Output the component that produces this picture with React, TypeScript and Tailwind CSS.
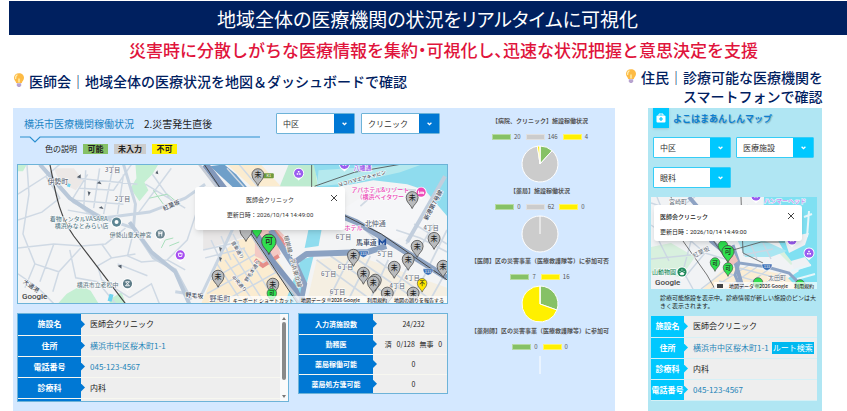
import React from 'react';

type Tone = 'gray' | 'green' | 'yellow';

const pinFill: Record<Tone, string> = {
  gray: '#b9bbbd',
  green: '#2fe04f',
  yellow: '#ffe600',
};

const pinText: Record<Tone, string> = {
  gray: '未',
  green: '可',
  yellow: '不',
};

const Bulb = () => (
  <svg className="w-3 h-4 shrink-0" viewBox="0 0 12 16">
    <path d="M6 1.2C3 1.2 1 3.2 1 5.8c0 2.2 1.6 3.1 2.2 5.2h5.6C9.400 8.900 11 8 11 5.800 11 3.200 9 1.200 6 1.200z" fill="#fdbb45" />
    <path d="M4 3c-1.200.8-1.600 2-1.300 3.400" stroke="#fff0b8" strokeWidth="1.300" fill="none" strokeLinecap="round" />
    <path d="M5 6l1 1 1-1v4.500H5z" fill="#ffe08a" />
    <path d="M3.800 11.200h4.400v2.300L7 15H5l-1.200-1.500z" fill="#b7a3cf" />
  </svg>
);

const SelectBox = ({ label, options, tone }: { label: string; options: string[]; tone: 'blue' | 'cyan' }) => (
  <div
    className={
      tone === 'blue'
        ? 'relative flex w-[79px] h-[21px] border border-[#6db3d8] rounded-[1px] bg-white'
        : 'relative flex w-[78px] h-[21px] border border-[#35cdf7] rounded-[1px] bg-white'
    }
  >
    <select aria-label={label} className="w-full appearance-none bg-transparent pl-[6px] text-[8px] text-[#333] outline-none">
      {options.map((o) => (
        <option key={o}>{o}</option>
      ))}
    </select>
    <span
      className={
        tone === 'blue'
          ? 'pointer-events-none flex items-center justify-center w-5 shrink-0 bg-[#0078d4]'
          : 'pointer-events-none flex items-center justify-center w-5 shrink-0 bg-[#00c8ff]'
      }
    >
      <svg className="w-[5px] h-1" viewBox="0 0 5 4">
        <path d="M.6.8L2.500 2.700 4.400.8" fill="none" stroke="#fff" strokeWidth="1.300" />
      </svg>
    </span>
  </div>
);

const Pin = ({ x, y, tone, s = 1, blank }: { x: number; y: number; tone: Tone; s?: number; blank?: boolean }) => (
  <g transform={`translate(${x} ${y}) scale(${s})`}>
    <path
      d="M0 10.500C-1.200 6.500-6 4.500-6-.6a6 6 0 0 1 12 0C6 4.500 1.200 6.500 0 10.500z"
      fill={pinFill[tone]}
      stroke="#4a4a4a"
      strokeWidth=".8"
    />
    {!blank && (
      <text y="2" fontSize="7" fontWeight="500" textAnchor="middle" fill="#222">
        {pinText[tone]}
      </text>
    )}
  </g>
);

const Poi = ({ x, y, fill, children }: { x: number; y: number; fill: string; children?: React.ReactNode }) => (
  <g transform={`translate(${x} ${y})`}>
    <path d="M0 7.500C-1 5.500-5.500 4-5.500 0a5.500 5.500 0 0 1 11 0C5.500 4 1 5.500 0 7.500z" fill="#fff" />
    <circle r="4.600" fill={fill} />
    {children ?? <path d="M-2 1.500h1.600v-1.600H-2zM.4 1.500H2v-1.600H.4zM-.8-.8H.8v-1.400H-.8z" fill="#fff" />}
  </g>
);

const Shield = ({ x, y }: { x: number; y: number }) => (
  <g transform={`translate(${x} ${y})`}>
    <path d="M-5-3h10c.4 3-1.500 5.500-5 6.500C-3.500 2.500-5.400 0-5-3z" fill="#3b6fb5" stroke="#fff" strokeWidth=".5" />
    <text y="1.200" fontSize="4" textAnchor="middle" fill="#fff">133</text>
  </g>
);

const placeLabels: { t: string; x: number; y: number; r?: number; c?: string; s?: number }[] = [
  { t: '3丁目', x: 95, y: 8 },
  { t: '伊勢町', x: 40, y: 20, s: 7 },
  { t: '2丁目', x: 105, y: 37 },
  { t: '着物レンタルVASARA', x: 61, y: 57, c: '#5d7f8c', s: 6 },
  { t: '横浜みなとみらい店', x: 64, y: 64, c: '#5d7f8c', s: 6 },
  { t: '伊勢山皇大神宮', x: 113, y: 73, c: '#6a7f8a', s: 6 },
  { t: '横浜市立老松中', x: 80, y: 123, c: '#6a7f8a', s: 6 },
  { t: '紅葉坂', x: 155, y: 43, r: -24, c: '#4a5260' },
  { t: '大通港', x: 12, y: 124, r: 35, c: '#4a5260' },
  { t: '野毛坂', x: 177, y: 134, r: 4, c: '#3c4656' },
  { t: '野毛町', x: 203, y: 137, s: 7 },
  { t: 'ヨコハマエアキャビン', x: 346, y: 16, r: -15, c: '#3f4c58', s: 5 },
  { t: 'アパホテル&リゾート', x: 364, y: 28, c: '#ea3fb4', s: 6 },
  { t: '（横浜ベイタワー', x: 364, y: 35, c: '#ea3fb4' },
  { t: '八幡通', x: 346, y: 6, c: '#9a4fe8' },
  { t: 'ホテル', x: 337, y: 66, c: '#ea3fb4' },
  { t: '北仲通', x: 359, y: 62, s: 7 },
  { t: '馬車道', x: 350, y: 81, s: 7, c: '#33445c' },
  { t: '6丁目', x: 327, y: 75 },
  { t: '6丁目', x: 312, y: 112 },
  { t: '6丁目', x: 329, y: 105 },
  { t: '6丁目', x: 321, y: 130 },
  { t: '5丁目', x: 369, y: 92 },
  { t: '4丁目', x: 415, y: 66 },
  { t: '4丁目', x: 396, y: 116 },
  { t: '4丁目', x: 381, y: 124 },
  { t: '新港第7号線', x: 419, y: 42, r: -62, c: '#3c4656' },
  { t: '根岸線・京浜東北線', x: 274, y: 98, r: 75, c: '#777', s: 6 },
  { t: '音楽通り', x: 219, y: 87, r: 60, c: '#5a6472', s: 5 },
  { t: '野毛本通り', x: 237, y: 108, r: -58, c: '#5a6472', s: 5 },
  { t: '中央通り', x: 221, y: 121, r: 48, c: '#5a6472', s: 5 },
];

const CityMap = () => (
  <svg className="block w-full h-full" viewBox="0 0 431 140" preserveAspectRatio="xMidYMid slice">
    <rect width="431" height="140" fill="#f3f4f5" />
    {/* land use */}
    <path d="M0 0h9L5 7H0zM118 0h23l-6 10-8 8 4 8-9 11-9-13 6-10zM40 140l9-10 14-8 10 5 8 13zM92 136l12-8 4 12H92z" fill="#c5efd3" />
    <path d="M36 4h20l10 12-8 10-16-8z" fill="#ece8e6" />
    <path d="M272 0h26l3 22h-38z" fill="#bdebd0" />
    <path d="M184 140l22-52 14-12 24-4 22 32 12 36z" fill="#fbecd0" />
    <path d="M186 60l34-2 10 14-44 14z" fill="#e9e7e7" />
    <path d="M210 0l34 0 20 22h-30z" fill="#fbecd0" />
    <path d="M300 96l36-6 95 34v16H290z" fill="#f5efe2" />
    {/* water */}
    <path d="M297 0h134v52l-22-26-18-6-34-4-54 10z" fill="#8fdcee" />
    <path d="M302 6l90-6h14l-22 8-62 14-22 2z" fill="#b5e9ee" />
    <path d="M300 22l24-2 1 30-20 16zM293 60h13l-4 22-14 2zM284 96l13-4-12 48h-17z" fill="#8fdcee" />
    <path d="M193 2l14-2 12 10 12 14h-14z" fill="#6f9fc9" />
    <path d="M328 44l34-22 40 2 16 18-10 24-38 12-30-14z" fill="#f5f6f8" />
    {/* minor streets */}
    <g fill="none" stroke="#cfd9e4" strokeWidth="1.500">
      <path d="M0 30l28-18 14-12M9 0l2 30-6 40 12 30-10 24M28 12l14 22-18 14-24 8M0 84l36-4 28 2 24-2 20-16M17 100l24 8 22-24M36 80l-14 38M41 108l-6 20M0 110l20 14 16 16M52 86l6 28 22 4 18 22M70 10l-16 26 28 22M62 24l34 2 18-26M56 36l50 4M68 6l-2 40M82 4l-6 40M96 0l-10 50M106 10l-6 40M60 14l60 6M50 46l44 8M120 50l34-46M128 20l40 24M135 10l20 28M84 80l10 14 24-4M94 94l-14 8 4 14 28 18M112 134l22-14 8 20M116 68l-6 24 14 6 26-2 20-20 10-30M150 96l18 10M100 100l30 12" />
      <path d="M186 86l36-8M188 94l40-10M194 76l10 22M204 72l10 24M216 70l10 20M208 96l30 44M216 90l32 50M226 84l28 46M194 116l52-30M190 130l64-36M210 136l50-28M200 100l26 40M210 4l36 40M222 0l34 40" />
    </g>
    <g fill="none" stroke="#c9d5e2" strokeWidth="3">
      <path d="M22 0l34 38 30 16 30 10 20 30 22 12 16 30M86 54l46-6 36-14 20-14M106 0l12 40-2 24M158 128l26 4 34-72" />
    </g>
    <g fill="none" stroke="#b9c8d9" strokeWidth="4">
      <path d="M22 0l30 34 34 22M112 58l22 30 24 20 14 32" />
    </g>
    {/* grid of blocks near the harbour */}
    <g fill="none" stroke="#d0d9e3" strokeWidth="1.800">
      <path d="M300 96l60 44M314 92l70 48M336 92l70 48M360 96l60 44M310 140l24-48M330 140l24-48M352 140l20-44M372 140l22-42M392 140l22-38M412 140l19-34M344 42l20-18 36 2M336 54l28 26M390 80l24-40 10-8M380 66l24 8 27 14M398 60l33 20M418 60l-20 34M431 66l-20 40" />
    </g>
    <path d="M391 78l38-66" stroke="#c2cedd" strokeWidth="4" />
    {/* station area */}
    <path d="M238 68l20-6 12 12-10 4 4 12-10 10-16-8z" fill="#f3c9c4" />
    <path d="M262 92l-16 10-8-6M256 66l14 16" fill="none" stroke="#e58f89" strokeWidth="4" />
    {/* expressways */}
    <path d="M188 0l40 52 26 44 24 30 6 14" fill="none" stroke="#8298bb" strokeWidth="7" />
    <path d="M182 0l40 52 34 52 30 36" fill="none" stroke="#c4cad4" strokeWidth="2.500" />
    <path d="M254 66l22 34 14-10 62-2 18-6" fill="none" stroke="#8ba2c2" strokeWidth="6" strokeLinejoin="round" />
    <path d="M278 98l10 22-4 20" fill="none" stroke="#8ba2c2" strokeWidth="5" />
    <path d="M306 44l34 14 40 24 51 32" fill="none" stroke="#8ea3c1" strokeWidth="6" />
    {/* railways */}
    <g fill="none" stroke="#454545">
      <path d="M32 0c5 22 7 48 24 72l52 68" strokeWidth="1.200" />
      <path d="M187 0l46 68 48 72" strokeWidth="1" />
      <path d="M325 50l40 20 66 46" strokeWidth="1" />
      <path d="M295 26V0M298 22l40-14 46-8" strokeWidth=".8" />
    </g>
    <path d="M132 34l18-4 12 10M136 26l10 14M144 84l4-8 8-2M152 82l10-4" fill="none" stroke="#a8dfbb" strokeWidth="1" />
    <path d="M92 130l4 1-2 7-4-1zM50 19l3 1-1 3-3-1z" fill="#6fd3ee" />
    <g fill="#56606c">
      <path d="M59 13l4-3v4zM71 32l-1-5 3 1zM84 20l-5-1 3-2zM86 45l-5-1 3-2zM138 9l2-3 1 4zM104 105l-4-3 4-1zM203 88l-1-5 3 1zM203 98l-1-5 3 1z" />
    </g>
    {placeLabels.map((l, i) => (
      <text
        key={i}
        transform={`translate(${l.x} ${l.y}) rotate(${l.r ?? 0})`}
        fontSize={l.s ?? 6}
        fontWeight="500"
        textAnchor="middle"
        fill={l.c ?? '#6b7280'}
        stroke="#ffffff"
        strokeWidth="1"
        paintOrder="stroke"
      >
        {l.t}
      </text>
    ))}
    <Poi x={99} y={58} fill="#5d8593"><circle r="2" fill="#fff" /></Poi>
    <Poi x={143} y={70} fill="#6b8590"><path d="M-2.500-2h5M-2-.4h4M-1.400-2v4.400M1.400-2v4.400" stroke="#fff" strokeWidth=".9" /></Poi>
    <Poi x={110} y={120} fill="#5d7c88"><path d="M-2-2L2 2M2-2l-4 4M-2-2h4M-2 2h4" stroke="#fff" strokeWidth=".9" /></Poi>
    <Poi x={163} y={91} fill="#a64df0"><path d="M-2-1.600h4l-.6 3.200h-2.800zM0-2.500v2" fill="none" stroke="#fff" strokeWidth=".9" /></Poi>
    <Poi x={282} y={9} fill="#9a5cf0" />
    <Poi x={328} y={0} fill="#9a5cf0" />
    <Poi x={405} y={28} fill="#ee4ab8"><path d="M-2.500-1.500v3.500M-2.500 1h5v1M-1 0h3.500v1" fill="none" stroke="#fff" strokeWidth="1" /></Poi>
    <path d="M363 81v-5l3 3 3-3v5" fill="none" stroke="#1f4f9e" strokeWidth="1.700" />
    <rect x="246" y="9" width="11" height="5" rx="1" fill="#6f9a3c" />
    <text x="252" y="13" fontSize="4" textAnchor="middle" fill="#fff">K1</text>
    <Shield x={347} y={90} />
    <Shield x={412} y={108} />
    <Pin x={241} y={11} tone="gray" />
    <Pin x={229} y={67} tone="gray" blank />
    <Pin x={240} y={66} tone="green" s={0.8} blank />
    <Pin x={201} y={113} tone="gray" />
    <Pin x={256} y={121} tone="gray" />
    <Pin x={255} y={130} tone="green" s={0.8} />
    <Pin x={396} y={34} tone="gray" />
    <Pin x={418} y={75} tone="gray" />
    <Pin x={401} y={83} tone="gray" />
    <Pin x={392} y={96} tone="gray" />
    <Pin x={337} y={92} tone="gray" />
    <Pin x={378} y={104} tone="gray" />
    <Pin x={427} y={103} tone="gray" />
    <Pin x={347} y={110} tone="gray" />
    <Pin x={359} y={117} tone="gray" blank />
    <Pin x={357} y={119} tone="gray" />
    <Pin x={371} y={130} tone="gray" />
    <Pin x={397} y={130} tone="gray" />
    <Pin x={406} y={120} tone="yellow" s={0.8} />
    <Pin x={252} y={78} tone="green" s={1.2} />
  </svg>
);

const PhoneMap = () => (
  <svg className="block w-full h-full" viewBox="0 0 166 92" preserveAspectRatio="xMidYMid slice">
    <rect width="166" height="92" fill="#f1f3f5" />
    <path d="M0 50l20-4 24 14-14 20-30-4zM128 56l12-4 10 8-10 8z" fill="#d8f0de" />
    <path d="M113 0h53v92h-24l-6-10 12-8-14-18-10-18-12-8z" fill="#7fe0f2" />
    <path d="M86 42l28 2 22 10-16 6-26 0z" fill="#a9e6f2" />
    <path d="M134 44l14-6 10-2-4 12-16 8zM140 64l14-4 6 8-16 6z" fill="#eef1f4" />
    <path d="M153 20l8-3M158 14l-2 26M140 74l20-6M146 82l18-5" stroke="#e6f6fa" strokeWidth="2" />
    <path d="M52 92l22-22 24 0 36 8 14 14z" fill="#fbedd4" />
    <g fill="none" stroke="#ccd7e3" strokeWidth="1.400">
      <path d="M0 6l24 8 20-14M6 0l16 40M0 28l14 10 26 6 14 12-20 24M8 44l10 20M0 62l40-4M40 44l-8 30 10 18M54 56l20 6M50 92l34-26M60 92l38-24M74 92l32-22M90 92l28-20M106 92l24-16M84 70l46 12M76 76l50 14M68 84l36 8" />
      <path d="M92 58l30-6M100 48l6 14M112 46l8 16M96 8l14 22" />
    </g>
    <path d="M38 0l12 14 10 30 24 20 8 28" fill="none" stroke="#8ea3c4" strokeWidth="4" />
    <path d="M82 48l6 18 28 4 22 6 12 12" fill="none" stroke="#8ea5c6" strokeWidth="3" />
    <path d="M88 66l-4 12 6 14" fill="none" stroke="#8ea5c6" strokeWidth="3" />
    <path d="M20 0c8 20 4 30 12 44l24 34 8 14M60 40l20 30M90 0l2 56 20 10M82 53l28-8 24 0" fill="none" stroke="#555" strokeWidth=".8" />
    <path d="M74 60l10-2 3 6-8 6z" fill="#efc2bc" />
    <g fontSize="6" textAnchor="middle" fill="#5f6b78" stroke="#fff" strokeWidth="1" paintOrder="stroke">
      <text x="27" y="7">宮崎町</text>
      <text transform="translate(51 57) rotate(-26)">紅葉坂</text>
      <text x="13" y="77" fill="#218a5c" fontWeight="500">山動物園</text>
      <text x="134" y="6" fill="#b05fe8">ハンマーヘッド</text>
      <text x="126" y="83">太田町</text>
    </g>
    <Poi x={105} y={-1} fill="#9a5cf0" />
    <Poi x={141} y={43} fill="#9a5cf0" />
    <Poi x={158} y={56} fill="#9a5cf0" />
    <Poi x={31} y={75} fill="#218a5c">
      <path d="M-2 2c0-2 4-2 4 0 0 1-4 1-4 0zM-2.500-.5h1M-1-2h.8M.4-2h.8M1.600-.5h1" fill="#fff" stroke="#fff" strokeWidth=".8" />
    </Poi>
    <Shield x={116} y={70} />
    <Pin x={72} y={49} tone="green" s={0.8} blank />
    <Pin x={64} y={66} tone="green" s={0.8} />
    <Pin x={77} y={71} tone="green" s={0.8} />
    <Pin x={107} y={86} tone="green" s={0.8} blank />
    <Pin x={149} y={88} tone="green" s={0.8} blank />
    <Pin x={77} y={55} tone="green" />
  </svg>
);

const CloseButton = () => (
  <button aria-label="閉じる" className="absolute right-[7px] top-[7px] w-2 h-2">
    <svg className="w-2 h-2" viewBox="0 0 8 8">
      <path d="M1 1l6 6M7 1L1 7" stroke="#444" strokeWidth="1" />
    </svg>
  </button>
);

const Pie = ({ values, colors }: { values: number[]; colors: string[] }) => {
  const total = values.reduce((a, b) => a + b, 0);
  const at = (f: number) => [19 + 18 * Math.sin(f * 2 * Math.PI), 19 - 18 * Math.cos(f * 2 * Math.PI)];
  let start = 0;
  return (
    <svg className="w-[38px] h-[38px] mt-1" viewBox="0 0 38 38">
      {values.map((v, i) => {
        if (!v) return null;
        const f = v / total;
        if (f === 1) return <circle key={i} cx="19" cy="19" r="18" fill={colors[i]} stroke="#fff" />;
        const [x1, y1] = at(start);
        start += f;
        const [x2, y2] = at(start);
        return (
          <path
            key={i}
            d={`M19 19L${x1} ${y1}A18 18 0 ${f > 0.5 ? 1 : 0} 1 ${x2} ${y2}Z`}
            fill={colors[i]}
            stroke="#fff"
            strokeLinejoin="round"
          />
        );
      })}
      <path d="M19 1v18" stroke="#fff" />
    </svg>
  );
};

const GREEN = '#86c166';
const GRAY = '#cccccc';
const YELLOW = '#fff000';

const charts = [
  { title: '【病院、クリニック】施設稼働状況', values: [20, 146, 4], colors: [GREEN, GRAY, YELLOW] },
  { title: '【薬局】施設稼働状況', values: [0, 62, 0], colors: [GREEN, GRAY, YELLOW] },
  { title: '【医師】区の災害事業（医療救護隊等）に参加可否', values: [7, 16], colors: [GREEN, YELLOW] },
  { title: '【薬剤師】区の災害事業（医療救護隊等）に参加可', values: [0, 0], colors: [GREEN, YELLOW] },
];

const facility = [
  { k: '施設名', v: '医師会クリニック' },
  { k: '住所', v: '横浜市中区桜木町1-1', href: '#map' },
  { k: '電話番号', v: '045-123-4567', href: 'tel:045-123-4567' },
  { k: '診療科', v: '内科' },
];

const phoneFacility = [facility[0], facility[1], facility[3], facility[2]];

const totals = [
  { k: '入力済施設数', v: '24/232' },
  { k: '勤務医', v: '済   0/128   無事   0' },
  { k: '薬局稼働可能', v: '0' },
  { k: '薬局処方箋可能', v: '0' },
];

const Arrow = ({ className }: { className: string }) => (
  <span className={`absolute left-full top-1/2 -mt-1 w-1 h-2 [clip-path:polygon(0_0,100%_50%,0_100%)] ${className}`}></span>
);

const App = () => {
  return (
    <div
      lang="ja"
      className="min-h-screen flex flex-col bg-white pt-px text-[#222] font-['Noto_Sans_CJK_JP',sans-serif]"
    >
      <h1 className="ml-[9px] h-[34px] flex items-center justify-center bg-[#00205f] text-white text-[19px] leading-none pr-px [font-feature-settings:'palt']">
        地域全体の医療機関の状況をリアルタイムに可視化
      </h1>
      <p className="h-[30px] pl-10 text-center text-[17px] leading-[29px] font-medium text-[#e0143c]">
        災害時に分散しがちな医療情報を集約<span className="[font-feature-settings:'palt']">・</span>可視化し
        <span className="[font-feature-settings:'palt']">、</span>迅速な状況把握と意思決定を支援
      </p>
      <div className="flex justify-between h-[43px] pt-[3px] pl-[13px] pr-6 text-[14px] leading-[19px] font-medium text-[#00205f]">
        <h2 className="flex items-start gap-1 pt-1">
          <Bulb />
          医師会｜地域全体の医療状況を地図＆ダッシュボードで確認
        </h2>
        <h2 className="flex items-start gap-1">
          <Bulb />
          <span>
            住民｜診療可能な医療機関を
            <span className="block pl-[42px]">スマートフォンで確認</span>
          </span>
        </h2>
      </div>

      <div className="grow grid grid-cols-[minmax(0,1fr)_174px] gap-[33px] pl-[13px] pr-[25px]">
        {/* Dashboard */}
        <section className="flex gap-[17px] pl-1 bg-[#d4e8ff]">
          <div className="grow min-w-0">
            <div className="flex justify-between h-14 pr-2">
              <div className="w-[240px] ml-[3px] pt-2">
                <div className="flex gap-[10px] h-4 pl-1 items-center text-[10px] leading-none">
                  <span className="text-[#1d84c4]">横浜市医療機関稼働状況</span>
                  <span>2.災害発生直後</span>
                </div>
                <svg className="block w-full h-[7px] mt-1" viewBox="0 0 240 7" preserveAspectRatio="none">
                  <path d="M0 1h10l5 5 5-5h220" fill="none" stroke="#2b8fd0" strokeWidth="1.200" />
                </svg>
                <div className="flex items-center gap-[6px] h-[11px] pl-[25px] text-[8px] leading-[10px]">
                  <span>色の説明</span>
                  <span className="w-[25px] text-center font-bold bg-[#86c166]">可能</span>
                  <span className="w-8 text-center font-bold bg-[#cccccc]">未入力</span>
                  <span className="w-[25px] text-center font-bold bg-[#fff000]">不可</span>
                </div>
              </div>
              <div className="flex gap-[6px] pt-[5px]">
                <SelectBox tone="blue" label="区" options={['中区']} />
                <SelectBox tone="blue" label="施設種別" options={['クリニック']} />
              </div>
            </div>

            <div className="relative h-[140px] border border-[#6db3d8] overflow-hidden">
              <CityMap />
              <div className="absolute left-[177px] top-[22px] w-[150px] h-[43px] pt-[9px] rounded-[3px] bg-white shadow-md text-center text-[6px] leading-[8px] text-[#333]">
                <p>医師会クリニック</p>
                <p className="mt-[7px] font-['Roboto','Noto_Sans_CJK_JP',sans-serif]">更新日時：2026/10/14 14:49:00</p>
                <CloseButton />
              </div>
              <span className="absolute left-1 bottom-0 text-[8px] leading-[12px] font-medium text-[#444] font-['Roboto',sans-serif]">Google</span>
              <div className="absolute right-0 bottom-0 flex gap-[7px] px-[3px] bg-white/70 text-[5px] leading-[7px] text-black">
                <button>キーボード ショートカット</button>
                <span>地図データ ©2026 Google</span>
                <a href="#terms">利用規約</a>
                <a href="#report">地図の誤りを報告する</a>
              </div>
            </div>

            <div className="flex items-start gap-[9px] mt-[9px]">
              <div className="grow flex h-[89px] border border-[#6db3d8] bg-[#fafafa] overflow-hidden">
                <table className="grow h-[105px] border-collapse text-[8px] leading-[12px]">
                  <tbody>
                    {facility.concat({ k: '', v: '' }).map((row, i) => (
                      <tr key={i} className="h-[21px] border-b border-[#f7f7f0] bg-[#eeeeee]">
                        <th className="relative w-[63px] p-0 bg-[#0078d4] text-white font-bold">
                          {row.k}
                          {row.k && <Arrow className="bg-[#0078d4]" />}
                        </th>
                        <td className="p-0 pl-[9px]">
                          {row.href ? <a href={row.href} className="text-[#1d84b8]">{row.v}</a> : row.v}
                        </td>
                      </tr>
                    ))}
                  </tbody>
                </table>
                <div className="w-2 shrink-0 flex flex-col items-center justify-between py-[3px]">
                  <svg className="w-1 h-[3px]" viewBox="0 0 4 3"><path d="M2 0l2 3H0z" fill="#777" /></svg>
                  <span className="w-1 h-[58px] -mt-[14px] rounded-full bg-[#8a8a8a]"></span>
                  <svg className="w-1 h-[3px]" viewBox="0 0 4 3"><path d="M2 3l2-3H0z" fill="#777" /></svg>
                </div>
              </div>
              <div className="w-[150px] shrink-0 border border-[#6db3d8]">
                <table className="w-full border-collapse text-[7px] leading-[10px]">
                  <tbody>
                    {totals.map((row, i) => (
                      <tr key={row.k} className={i < 3 ? 'h-5 border-b border-[#f7f7f0] bg-[#eeeeee]' : 'h-[19px] bg-[#eeeeee]'}>
                        <th className="relative w-[74px] p-0 bg-[#0078d4] text-white font-bold">
                          {row.k}
                          <Arrow className="bg-[#0078d4]" />
                        </th>
                        <td className="p-0 pl-[9px] pr-[2px] text-center whitespace-pre">{row.v}</td>
                      </tr>
                    ))}
                  </tbody>
                </table>
              </div>
            </div>
          </div>

          <div className="w-[150px] shrink-0 flex flex-col gap-1 pt-[9px]">
            {charts.map((c) => (
              <div key={c.title} className="flex flex-col items-center text-[6px] leading-[8px] text-[#555]">
                <h3 className="font-bold whitespace-nowrap">{c.title}</h3>
                <div className="flex gap-[5px] mt-2">
                  {c.values.map((v, i) => (
                    <span key={i} className="flex items-center gap-[3px]">
                      <span className="w-[19px] h-[6px] border border-white/40" style={{ backgroundColor: c.colors[i] }}></span>
                      {v}
                    </span>
                  ))}
                </div>
                <Pie values={c.values} colors={c.colors} />
              </div>
            ))}
          </div>
        </section>

        {/* Phone view */}
        <section className="pl-[3px] pr-[5px] bg-[#b0e6f3]">
          <div className="flex items-center gap-1 h-5 pl-[2px]">
            <span className="flex items-center justify-center w-4 h-5 bg-[#00c8ff] shadow-sm">
              <svg className="w-[10px] h-[10px]" viewBox="0 0 10 10">
                <path d="M3 2.500V1h4v1.500" fill="none" stroke="#fff" strokeWidth="1" />
                <rect x=".5" y="2.500" width="9" height="7" rx="1" fill="#fff" />
                <path d="M5 4v4M3 6h4" stroke="#00c8ff" strokeWidth="1.200" />
              </svg>
            </span>
            <h3 className="text-[9px] leading-none font-bold text-[#0c7fd0] [text-shadow:1px_1px_1px_rgba(0,0,0,0.25)]">
              よこはまあんしんマップ
            </h3>
          </div>
          <div className="flex flex-wrap gap-x-[5px] gap-y-[9px] mt-[9px] pl-[2px]">
            <SelectBox tone="cyan" label="区" options={['中区']} />
            <SelectBox tone="cyan" label="施設種別" options={['医療施設']} />
            <SelectBox tone="cyan" label="診療科" options={['眼科']} />
          </div>

          <div className="relative h-[92px] mt-[9px] overflow-hidden">
            <PhoneMap />
            <div className="absolute left-[3px] top-2 w-[148px] h-9 pt-2 pl-[6px] rounded-[3px] bg-white shadow-md text-[6px] leading-[8px]">
              <p className="font-medium">医師会クリニック</p>
              <p className="mt-[7px] font-['Roboto','Noto_Sans_CJK_JP',sans-serif]">更新日時：2026/10/14 14:49:00</p>
              <CloseButton />
            </div>
            <span className="absolute left-1 bottom-0 text-[8px] leading-[12px] font-medium text-[#444] font-['Roboto',sans-serif]">Google</span>
            <div className="absolute right-0 bottom-0 flex items-center gap-[6px] px-[3px] bg-white/70 text-[5px] leading-[7px] text-black">
              <span className="w-[6px] h-1 bg-[#444]"></span>
              <span>地図データ ©2026 Google</span>
              <a href="#terms">利用規約</a>
            </div>
          </div>

          <p className="mt-[5px] pl-[9px] text-[6px] leading-[8px]">
            診療可能施設を表示中。診療情報が新しい施設のピンは大きく表示されます。
          </p>

          <table className="w-full mt-[6px] border-collapse text-[8px] leading-[12px]">
            <tbody>
              {phoneFacility.map((row) => (
                <tr key={row.k} className="h-[21px] border-b border-[#d5f0f6] bg-[#eeeeee]">
                  <th className="relative w-[33px] p-0 bg-[#00c8ff] text-white font-bold whitespace-nowrap">
                    {row.k}
                    <Arrow className="bg-[#00c8ff]" />
                  </th>
                  <td className="p-0 pl-[9px] whitespace-nowrap">
                    {row.href ? <a href={row.href} className="text-[#1d84b8]">{row.v}</a> : row.v}
                    {row.k === '住所' && (
                      <button className="ml-[3px] px-px bg-[#00b8f0] text-white">ルート検索</button>
                    )}
                  </td>
                </tr>
              ))}
            </tbody>
          </table>
        </section>
      </div>
    </div>
  );
};

export default App;
